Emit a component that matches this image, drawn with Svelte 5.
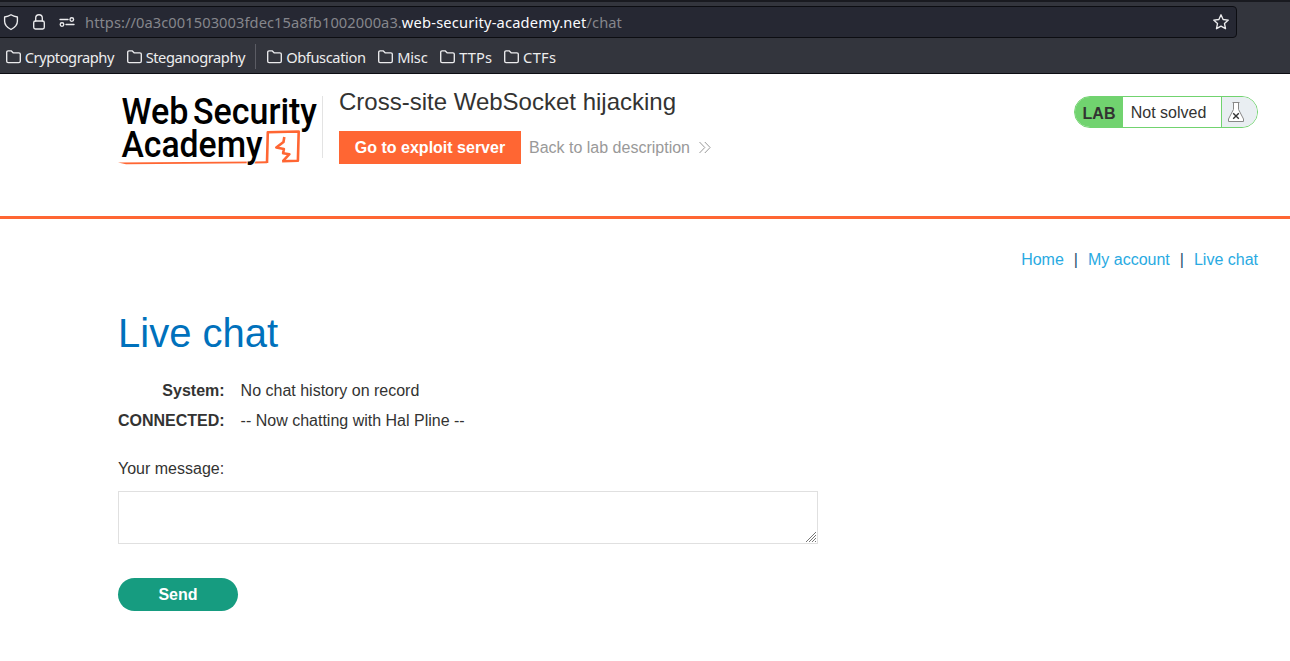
<script>
  const bookmarks = [
    { name: 'Cryptography', width: 90, spacing: -0.43 },
    { name: 'Steganography', width: 100, spacing: -0.46 },
    { name: 'Obfuscation', width: 80, spacing: -0.4, divided: true },
    { name: 'Misc', width: 31, spacing: -0.2 },
    { name: 'TTPs', width: 33, spacing: 0.1 },
    { name: 'CTFs', width: 33, spacing: 0.3 }
  ];
  const links = ['Home', 'My account', 'Live chat'];
  const messages = [
    { from: 'System:', text: 'No chat history on record' },
    { from: 'CONNECTED:', text: '-- Now chatting with Hal Pline --' }
  ];
</script>

<div class="browser">
  <div class="address">
    <svg class="shield" width="16" height="18" viewBox="0 0 16 18"><path d="M8 1.7C10 3 12 3.6 14.4 4v4.3c0 3.2-2.4 6.2-6.4 8.2-4-2-6.4-5-6.4-8.2V4C4 3.6 6 3 8 1.7Z" /></svg>
    <svg class="lock" width="14" height="18" viewBox="0 0 14 18"><rect x="1.7" y="8" width="10.6" height="8" rx="1.7" /><path d="M3.7 8V5a3.3 3.3 0 0 1 6.6 0v3" /></svg>
    <svg class="tune" width="16" height="14" viewBox="0 0 16 14"><path d="M1 4.5h8M7 9.5h8" /><circle cx="12.8" cy="4.5" r="1.8" /><circle cx="3" cy="9.5" r="1.8" /></svg>
    <span class="url">https://0a3c001503003fdec15a8fb1002000a3.<b>web-security-academy.net</b>/chat</span>
    <svg class="star" width="18" height="18" viewBox="0 0 18 18"><path d="m9 1.8 2.1 4.7 5.2.6-3.8 3.5 1 5.1L9 13.2l-4.5 2.5 1-5.1-3.8-3.5 5.2-.6Z" /></svg>
  </div>
  <div class="bookmarks">
    {#each bookmarks as b}
      {#if b.divided}<i class="divider"></i>{/if}
      <span class="bookmark">
        <svg width="17" height="15" viewBox="0 0 17 15"><path d="M1.7 12.2V3.2c0-.8.5-1.4 1.4-1.4h3l2 2h5.8c.9 0 1.4.5 1.4 1.3v7.1c0 .8-.5 1.4-1.4 1.4H3.1c-.9 0-1.4-.6-1.4-1.4Z" /></svg>
        <span style="width: {b.width}px; letter-spacing: {b.spacing}px">{b.name}</span>
      </span>
    {/each}
  </div>
</div>

<header>
  <svg class="logo" width="200" height="72" viewBox="0 0 200 72">
    <text x="3.5" y="28.2" textLength="67" lengthAdjust="spacingAndGlyphs">Web</text>
    <text x="75" y="28.2" textLength="124" lengthAdjust="spacingAndGlyphs">Security</text>
    <path class="underline" d="M0 66.6 149 65.3v2L8 68.2Z" />
    <path class="mark" d="M149 67 149.8 36.3l30.9-.8-.8 29.2-15.8.5" />
    <path class="mark" d="m166.3 41-.8 5-7.2 5.5 7.6 1.6-.8 4.1 6.3 1-6.5 7" />
    <text class="halo" x="3.5" y="61" textLength="141" lengthAdjust="spacingAndGlyphs">Academy</text>
  </svg>
  <div class="title">
    <h2>Cross-site WebSocket hijacking</h2>
    <div class="actions">
      <button class="exploit">Go to exploit server</button>
      <a class="back" href="#lab">Back to lab description
        <svg width="14" height="14" viewBox="0 0 14 14"><path d="m1.5 1 5.3 5.5L1.5 12M6.8 1l5.3 5.5L6.8 12" /></svg>
      </a>
    </div>
  </div>
  <div class="status">
    <strong>LAB</strong>
    <span>Not solved</span>
    <div class="flask">
      <svg width="18" height="22" viewBox="0 0 18 22"><path class="glass" d="M6.5 2v6.4L1.5 18v2.5h15V18l-5-9.6V2" /><path class="glass" d="M5.5 1.5h7" /><path class="cross" d="m6.2 12.3 5.6 5.4m0-5.4-5.6 5.4" /></svg>
    </div>
  </div>
</header>

<main>
  <nav>
    {#each links as link, i}
      {#if i}<span>|</span>{/if}<a href="#page">{link}</a>
    {/each}
  </nav>
  <h1>Live chat</h1>
  <div class="chat">
    {#each messages as m}
      <strong>{m.from}</strong><span>{m.text}</span>
    {/each}
  </div>
  <label for="message">Your message:</label>
  <div class="field">
    <textarea id="message"></textarea>
    <svg class="grip" width="12" height="12" viewBox="0 0 12 12"><path d="M1 11 11 1M4 11l7-7M7 11l4-4M10 11l1-1" /></svg>
  </div>
  <button class="send">Send</button>
</main>

<style>
  :global(body) { margin: 0; background: #fff; color: #333332; font: 16px/20px "Liberation Sans", Arial, sans-serif; overflow: hidden; }
  svg { display: block; flex: none; fill: none; overflow: visible; }
  a { text-decoration: none; }
  button { border: 0; padding: 0; color: #fff; font: bold 16px/20px "Liberation Sans", Arial, sans-serif; }

  .browser { box-sizing: border-box; height: 74px; padding-top: 4px; background: #33353d; border-top: 2px solid #191a20; border-bottom: 1px solid #0c0d12; color: #ededee; font: 14.67px/20px "Noto Sans", sans-serif; }
  .browser svg { stroke: #ececee; stroke-width: 1.35; stroke-linejoin: round; stroke-linecap: round; }
  .address { box-sizing: border-box; display: flex; align-items: center; width: 1238px; height: 32px; margin-left: -1px; padding: 0 6px 0 3px; background: #262833; border: 1px solid #0c0d12; border-radius: 0 4px 4px 0; }
  .lock { margin-left: 13px; }
  .tune { margin-left: 13px; }
  .url { margin-left: 10px; color: #85868c; white-space: nowrap; letter-spacing: 0.07px; }
  .url b { color: #fbfbfe; font-weight: 400; letter-spacing: 0.19px; }
  .star { margin-left: auto; }
  .bookmarks { display: flex; align-items: center; height: 35px; padding: 0 0 0 5px; box-sizing: border-box; margin-top: 1px; }
  .bookmark { display: flex; align-items: center; gap: 2.7px; margin-right: 11.3px; }
  .bookmark span { white-space: nowrap; }
  .divider { width: 1px; height: 25px; margin: 0 10px 0 -1.5px; background: #5b5c64; }

  header { box-sizing: border-box; display: flex; align-items: flex-start; height: 145px; padding: 22px 32px 0 118px; border-bottom: 3px solid #ff6633; }
  .logo text { fill: #000; font: 500 37px Roboto, sans-serif; }
  .logo .halo { stroke: #fff; stroke-width: 1.5px; paint-order: stroke; }
  .underline { fill: #ff6633; }
  .mark { stroke: #ff6633; stroke-width: 2.6; stroke-linejoin: round; }
  .title { height: 62px; margin-left: 4px; padding-left: 16px; border-left: 1px solid #e3e3e3; }
  h2 { margin: -8px 0 0; font-size: 24px; line-height: 28px; font-weight: 400; }
  .actions { display: flex; align-items: center; margin-top: 15px; }
  .exploit { width: 182px; height: 33px; background: #ff6633; }
  .back { display: flex; align-items: center; gap: 8px; margin-left: 8px; color: #999; }
  .back svg { stroke: #999; stroke-width: 1; }
  .status { box-sizing: border-box; display: flex; width: 184px; height: 32px; margin-left: auto; overflow: hidden; border: 1px solid #71d36f; border-radius: 16px; line-height: 32px; }
  .status strong { width: 48px; background: #71d36f; text-align: center; line-height: 34px; }
  .status span { width: 98px; text-align: center; text-indent: -7px; }
  .flask { flex: 1; display: flex; align-items: center; padding-left: 5px; background: #e9eef2; border-left: 1px solid #71d36f; }
  .glass { fill: #fff; stroke: #888; }
  .cross { stroke: #333; stroke-width: 1.4; }

  main { padding: 31px 32px 0 118px; }
  nav { display: flex; justify-content: flex-end; gap: 10px; color: #1d5070; }
  nav a { color: #29aae2; }
  h1 { margin: 39px 0 0; color: #0071bc; font-size: 40px; line-height: 48px; font-weight: 400; }
  .chat { display: grid; grid-template-columns: 106.6px auto; column-gap: 16px; row-gap: 10px; margin-top: 24px; }
  .chat strong { display: flex; justify-content: flex-end; white-space: nowrap; }
  label { display: block; margin-top: 28px; }
  .field { position: relative; width: 700px; height: 53px; margin-top: 12px; }
  textarea { display: block; box-sizing: border-box; width: 100%; height: 100%; border: 1px solid #e0e0e0; resize: none; }
  .grip { position: absolute; right: 1px; bottom: 1px; stroke: #777; stroke-width: 1; }
  .send { display: block; width: 120px; height: 33px; margin-top: 34px; border-radius: 17px; background: #169c80; }
</style>
